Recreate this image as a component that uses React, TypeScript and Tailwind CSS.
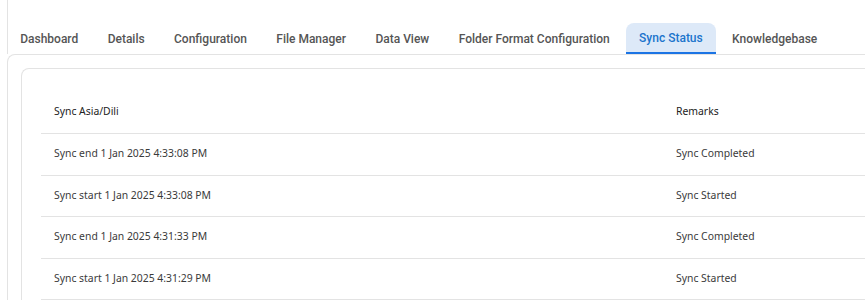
import React from "react";

const tabs = [
  "Dashboard",
  "Details",
  "Configuration",
  "File Manager",
  "Data View",
  "Folder Format Configuration",
  "Sync Status",
  "Knowledgebase",
];

const rows = [
  ["Sync end 1 Jan 2025 4:33:08 PM", "Sync Completed"],
  ["Sync start 1 Jan 2025 4:33:08 PM", "Sync Started"],
  ["Sync end 1 Jan 2025 4:31:33 PM", "Sync Completed"],
  ["Sync start 1 Jan 2025 4:31:29 PM", "Sync Started"],
];

export default function App() {
  return (
    <div className="w-[865px] h-[306px] overflow-hidden bg-white pl-[7px]">
      <div className="border-l border-[#e3e3e3] pt-[23px]" style={{ fontFamily: "Roboto, sans-serif" }}>
        <div className="flex items-end -ml-[2.5px]">
          {tabs.map((t) => {
            const active = t === "Sync Status";
            return (
              <div
                key={t}
                className={
                  active
                    ? "h-[31px] px-[13px] mx-[1.7px] flex items-center bg-[#dde9f8] text-[#1b74cc] rounded-t-[8px] border-b-2 border-[#1b74e4] text-[12px] font-medium"
                    : "h-[31px] px-[14.7px] flex items-center text-[#555] text-[12px] font-medium"
                }
              >
                {t}
              </div>
            );
          })}
        </div>
      </div>
      <div className="border-l border-t border-[#e3e3e3] rounded-tl-[8px] pt-[13px] pl-[13px]">
        <div
          className="border-l border-t border-[#e3e3e3] rounded-tl-[8px] pt-[20px] pl-[19px]"
          style={{ fontFamily: "'Noto Sans', sans-serif" }}
        >
          <div className="grid grid-cols-[622px_1fr] h-[45px] pt-[1px] border-b border-[#e3e3e3] items-center text-[10.4px] text-[#222]">
            <div className="pl-[13px]">Sync Asia/Dili</div>
            <div className="pl-[13px]">Remarks</div>
          </div>
          {rows.map((r, i) => (
            <div
              key={i}
              className="grid grid-cols-[622px_1fr] h-[41.5px] border-b border-[#e3e3e3] items-center text-[10.4px] text-[#3a3a3a]"
            >
              <div className="pl-[13px]">{r[0]}</div>
              <div className="pl-[13px]">{r[1]}</div>
            </div>
          ))}
        </div>
      </div>
    </div>
  );
}
